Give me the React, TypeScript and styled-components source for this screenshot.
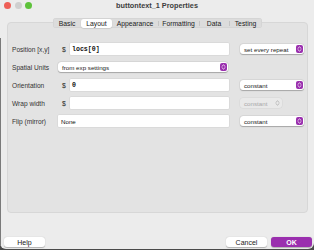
import React from "react";
import styled, { createGlobalStyle } from "styled-components";

const Global = createGlobalStyle`
  html, body { margin: 0; padding: 0; background: #4a4a4a; }
  body {
    width: 314px; height: 250px; overflow: hidden;
    font-family: "Liberation Sans", Arial, sans-serif;
    -webkit-font-smoothing: antialiased;
  }
`;

const PURPLE = "#9a2fae";

const Window = styled.div`
  position: relative;
  width: 314px;
  height: 249px;
  background: #ececec;
  border-radius: 0 0 6px 6px;
  display: flex;
  flex-direction: column;
  &::before {
    content: "";
    position: absolute;
    left: 0;
    top: 38px;
    bottom: 4px;
    width: 1px;
    background: #7a7a7a;
  }
`;

const TitleBar = styled.div`
  height: 11px;
  display: grid;
  grid-template-columns: 1fr auto 1fr;
  align-items: center;
`;

const Lights = styled.div`
  display: flex;
  gap: 3.5px;
  padding-left: 4px;
`;

const Light = styled.span<{ $c: string }>`
  width: 7px;
  height: 7px;
  border-radius: 50%;
  background: ${(p) => p.$c};
`;

const Title = styled.div`
  font-size: 7.3px;
  font-weight: 700;
  color: #3d3d3d;
`;

const TabRow = styled.div`
  display: flex;
  justify-content: center;
  margin-top: 7px;
  position: relative;
  z-index: 1;
  padding-left: 1px;
`;

const TabBar = styled.div`
  display: flex;
  align-items: center;
  height: 10px;
  background: #dcdcdc;
  border-radius: 3px;
  box-shadow: inset 0 0 0 0.5px rgba(0, 0, 0, 0.06);
`;

const Tab = styled.div<{ $w: number; $active?: boolean; $sep?: boolean }>`
  width: ${(p) => p.$w}px;
  height: 9px;
  display: flex;
  align-items: center;
  justify-content: center;
  font-size: 6.8px;
  color: #222;
  position: relative;
  border-radius: 2.5px;
  background: ${(p) => (p.$active ? "#ffffff" : "transparent")};
  box-shadow: ${(p) => (p.$active ? "0 0.5px 1px rgba(0,0,0,0.2)" : "none")};
  &::before {
    content: "";
    display: ${(p) => (p.$sep ? "block" : "none")};
    position: absolute;
    left: 0;
    top: 2px;
    height: 5px;
    width: 1px;
    background: #c4c4c4;
  }
`;

const Panel = styled.div`
  margin: -6px 6px 0 7px;
  height: 189px;
  background: #e3e3e3;
  border: 1px solid #d7d7d7;
  border-radius: 4px;
`;

const Form = styled.div`
  display: grid;
  grid-template-columns: 46px 171px 1fr;
  grid-auto-rows: 12px;
  row-gap: 6px;
  padding: 20px 3px 0 4px;
  align-items: center;
`;

const Label = styled.div`
  font-size: 6.6px;
  color: #333;
  white-space: nowrap;
`;

const Field = styled.div`
  display: flex;
  align-items: center;
  height: 12px;
`;

const Dollar = styled.span`
  width: 12px;
  padding-left: 4px;
  box-sizing: border-box;
  font-size: 6.8px;
  color: #222;
`;

const Input = styled.div<{ $code?: boolean }>`
  flex: 1;
  height: 12px;
  background: #fff;
  border-radius: 1px;
  box-shadow: 0 0 0 0.5px rgba(0, 0, 0, 0.08);
  display: flex;
  align-items: center;
  padding-left: ${(p) => (p.$code ? "2px" : "3px")};
  font-family: ${(p) => (p.$code ? '"Liberation Mono", monospace' : "inherit")};
  font-weight: ${(p) => (p.$code ? 700 : 400)};
  font-size: ${(p) => (p.$code ? "6.6px" : "6.2px")};
  color: #111;
`;

const Right = styled.div`
  padding-left: 11px;
  display: flex;
  align-items: center;
`;

const Select = styled.div<{ $w: number; $disabled?: boolean }>`
  width: ${(p) => p.$w}px;
  height: 10px;
  box-sizing: border-box;
  border-radius: 3px;
  background: ${(p) => (p.$disabled ? "#e9e9e9" : "#fff")};
  box-shadow: ${(p) =>
    p.$disabled
      ? "0 0 0 0.5px rgba(0,0,0,0.06)"
      : "0 0.5px 1px rgba(0,0,0,0.25), 0 0 0 0.5px rgba(0,0,0,0.06)"};
  display: flex;
  align-items: center;
  justify-content: space-between;
  padding: 0 1px 0 4px;
  font-size: 6.2px;
  color: ${(p) => (p.$disabled ? "#a8a8a8" : "#222")};
  white-space: nowrap;
`;

const Stepper = styled.span<{ $disabled?: boolean }>`
  flex: none;
  width: 7px;
  height: 8px;
  border-radius: 2px;
  background: ${(p) => (p.$disabled ? "transparent" : PURPLE)};
  display: flex;
  align-items: center;
  justify-content: center;
`;

const Footer = styled.div`
  display: flex;
  justify-content: space-between;
  padding: 0 2px 0 4px;
  margin-top: 24px;
`;

const Group = styled.div`
  display: flex;
  gap: 4px;
`;

const Button = styled.div<{ $primary?: boolean }>`
  width: 41px;
  height: 10px;
  border-radius: 3px;
  display: flex;
  align-items: center;
  justify-content: center;
  font-size: 7px;
  font-weight: ${(p) => (p.$primary ? 700 : 400)};
  color: ${(p) => (p.$primary ? "#fff" : "#222")};
  background: ${(p) => (p.$primary ? PURPLE : "#fff")};
  box-shadow: 0 0.5px 1px rgba(0, 0, 0, 0.25);
`;

const Chevrons = ({ color }: { color: string }) => (
  <svg width="5" height="6" viewBox="0 0 5 6">
    <path d="M1 2.3 L2.5 0.9 L4 2.3 M1 3.7 L2.5 5.1 L4 3.7" fill="none" stroke={color} strokeWidth="0.8" strokeLinecap="round" strokeLinejoin="round" />
  </svg>
);

const PopUp = ({ text, w, disabled }: { text: string; w: number; disabled?: boolean }) => (
  <Select $w={w} $disabled={disabled}>
    <span>{text}</span>
    <Stepper $disabled={disabled}>
      <Chevrons color={disabled ? "#a8a8a8" : "#fff"} />
    </Stepper>
  </Select>
);

const tabs = [
  { name: "Basic", w: 28 },
  { name: "Layout", w: 31, active: true },
  { name: "Appearance", w: 46 },
  { name: "Formatting", w: 41 },
  { name: "Data", w: 30 },
  { name: "Testing", w: 33 },
];

export default function App() {
  return (
    <>
      <Global />
      <Window>
        <TitleBar>
          <Lights>
            <Light $c="#ee5f57" />
            <Light $c="#cfcfcf" />
            <Light $c="#5ec23b" />
          </Lights>
          <Title>buttontext_1 Properties</Title>
          <div />
        </TitleBar>
        <TabRow>
          <TabBar>
            {tabs.map((t, i) => {
              const prev = tabs[i - 1];
              const sep = i > 0 && !t.active && !(prev && prev.active);
              return (
                <Tab key={t.name} $w={t.w} $active={t.active} $sep={sep}>
                  {t.name}
                </Tab>
              );
            })}
          </TabBar>
        </TabRow>
        <Panel>
          <Form>
            <Label>Position [x,y]</Label>
            <Field>
              <Dollar>$</Dollar>
              <Input $code>locs[0]</Input>
            </Field>
            <Right>
              <PopUp text="set every repeat" w={64} />
            </Right>

            <Label>Spatial Units</Label>
            <Field>
              <PopUp text="from exp settings" w={170} />
            </Field>
            <div />

            <Label>Orientation</Label>
            <Field>
              <Dollar>$</Dollar>
              <Input $code>0</Input>
            </Field>
            <Right>
              <PopUp text="constant" w={64} />
            </Right>

            <Label>Wrap width</Label>
            <Field>
              <Dollar>$</Dollar>
              <Input />
            </Field>
            <Right>
              <PopUp text="constant" w={42} disabled />
            </Right>

            <Label>Flip (mirror)</Label>
            <Field>
              <Input>None</Input>
            </Field>
            <Right>
              <PopUp text="constant" w={64} />
            </Right>
          </Form>
        </Panel>
        <Footer>
          <Button>Help</Button>
          <Group>
            <Button>Cancel</Button>
            <Button $primary>OK</Button>
          </Group>
        </Footer>
      </Window>
    </>
  );
}
